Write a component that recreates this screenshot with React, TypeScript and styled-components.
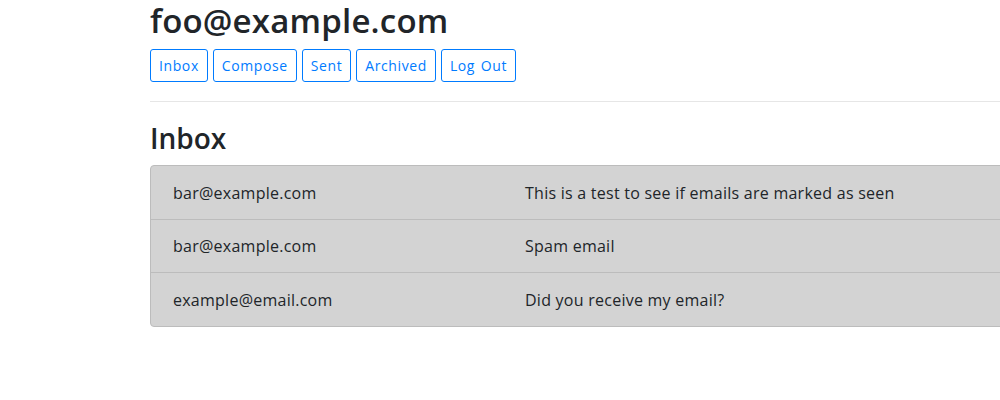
import React from "react";
import styled, { createGlobalStyle } from "styled-components";

const Global = createGlobalStyle`
  html, body { margin: 0; padding: 0; background: #fff; overflow: hidden; }
  body {
    font-family: "Open Sans", "Noto Sans", sans-serif;
    color: #212529;
    font-size: 16px;
  }
`;

const Page = styled.div`
  padding-left: 150px;
  width: 1110px;
`;

const Title = styled.h2`
  margin: 0 0 8px 0;
  height: 41px;
  font-size: 33px;
  font-weight: 600;
  line-height: 41px;
  letter-spacing: 0.2px;
`;

const Nav = styled.div`
  display: flex;
  gap: 5px;
`;

const NavButton = styled.button`
  font-family: inherit;
  height: 33px;
  padding: 0 8px;
  font-size: 14px;
  letter-spacing: 0.6px;
  word-spacing: 1.5px;
  color: #007bff;
  background: transparent;
  border: 1px solid #007bff;
  border-radius: 3px;
  cursor: pointer;
`;

const Rule = styled.hr`
  margin: 19px 0 0 0;
  border: 0;
  border-top: 1px solid #e6e6e6;
`;

const Heading = styled.h3`
  margin: 19px 0 10px 0;
  font-size: 28px;
  font-weight: 600;
  line-height: 34px;
`;

const List = styled.div`
  display: flex;
  flex-direction: column;
  border: 1px solid #bcbcbc;
  border-radius: 4px;
  background: #d3d3d3;
  overflow: hidden;
`;

const Row = styled.div<{ $h: number }>`
  display: grid;
  grid-template-columns: 352px 1fr;
  align-items: center;
  height: ${(p) => p.$h}px;
  padding: 0 22px;
  font-size: 16px;
  letter-spacing: 0.25px;
  & + & {
    border-top: 1px solid #bcbcbc;
  }
`;

const emails = [
  { from: "bar@example.com", subject: "This is a test to see if emails are marked as seen", h: 53 },
  { from: "bar@example.com", subject: "Spam email", h: 52 },
  { from: "example@email.com", subject: "Did you receive my email?", h: 53 },
];

export default function App() {
  return (
    <>
      <Global />
      <Page>
        <Title>foo@example.com</Title>
        <Nav>
          <NavButton>Inbox</NavButton>
          <NavButton>Compose</NavButton>
          <NavButton>Sent</NavButton>
          <NavButton>Archived</NavButton>
          <NavButton>Log Out</NavButton>
        </Nav>
        <Rule />
        <Heading>Inbox</Heading>
        <List>
          {emails.map((e, i) => (
            <Row key={i} $h={e.h}>
              <span>{e.from}</span>
              <span>{e.subject}</span>
            </Row>
          ))}
        </List>
      </Page>
    </>
  );
}
